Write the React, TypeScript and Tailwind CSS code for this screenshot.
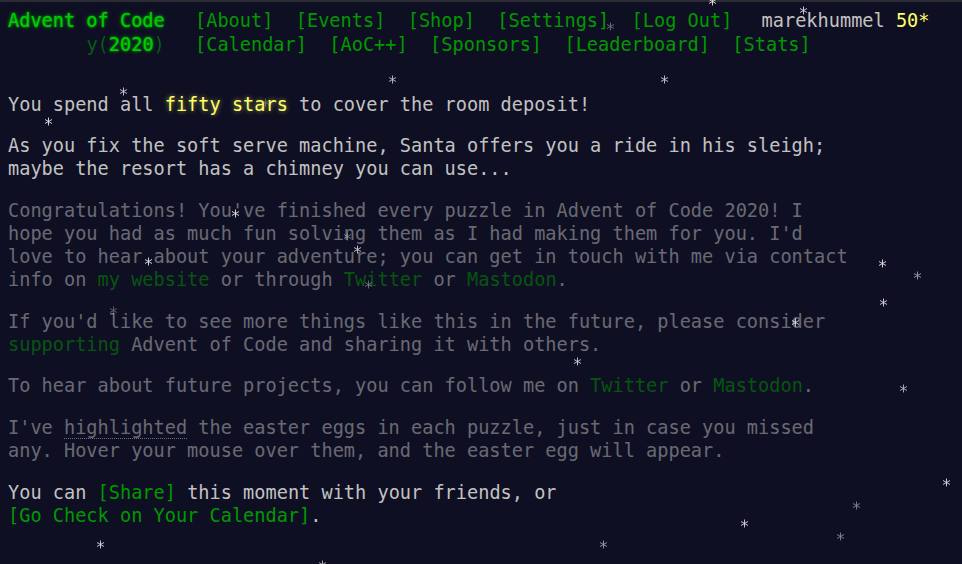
import React from "react";

const stars: [number, number, number][] = [
  [712, 1, 0.9],
  [803, 10, 0.85],
  [610, 26, 0.4],
  [392, 79, 0.75],
  [664, 79, 0.8],
  [123, 91, 0.8],
  [265, 102, 0.3],
  [48, 121, 0.9],
  [235, 213, 0.9],
  [347, 236, 0.45],
  [357, 249, 0.8],
  [148, 261, 0.9],
  [368, 284, 0.4],
  [882, 263, 0.9],
  [917, 275, 0.6],
  [883, 302, 0.85],
  [113, 310, 0.35],
  [795, 322, 0.85],
  [577, 361, 0.8],
  [903, 388, 0.7],
  [946, 482, 0.85],
  [856, 505, 0.5],
  [744, 523, 0.85],
  [840, 536, 0.5],
  [603, 544, 0.6],
  [100, 544, 0.85],
  [322, 564, 0.7],
];

function Star({ x, y, o }: { x: number; y: number; o: number }) {
  return (
    <svg
      className="absolute pointer-events-none"
      style={{ left: x - 4.5, top: y - 4.5, opacity: o }}
      width="9"
      height="9"
      viewBox="0 0 10 10"
    >
      <g stroke="#ffffff" strokeWidth="1" strokeLinecap="round">
        <line x1="5" y1="1" x2="5" y2="9" />
        <line x1="1.5" y1="3" x2="8.5" y2="7" />
        <line x1="1.5" y1="7" x2="8.5" y2="3" />
      </g>
    </svg>
  );
}

const navTop = ["About", "Events", "Shop", "Settings", "Log Out"];
const navBottom = ["Calendar", "AoC++", "Sponsors", "Leaderboard", "Stats"];

function Link({ children }: { children: React.ReactNode }) {
  return <a className="text-[#009900] no-underline">{children}</a>;
}

export default function App() {
  return (
    <div
      className="relative w-full h-[564px] overflow-hidden bg-[#0f0f23] text-[#c2c2c2] text-[18.6px] leading-[23px]"
      style={{ fontFamily: '"DejaVu Sans Mono", "Liberation Mono", monospace' }}
    >
      <div className="h-[2px] bg-[#2c2c34]" />

      {/* header */}
      <header className="pt-[6px] mb-[36.5px] whitespace-nowrap">
        <div className="flex items-center h-6">
          <div className="pl-2 w-[164.8px]">
            <span className="text-[#00cc00] [text-shadow:0_0_2px_#00cc00,0_0_5px_#00cc0080]">Advent of Code</span>
          </div>
          <ul className="flex ml-[19px]">
            {navTop.map((n) => (
              <li key={n} className="px-[11.2px]">
                <Link>[{n}]</Link>
              </li>
            ))}
          </ul>
          <div className="ml-[18px]">
            marekhummel <span className="text-[#ffff66]">50*</span>
          </div>
        </div>
        <div className="flex items-center h-6">
          <div className="pl-2 w-[164.8px] text-right">
            <span className="text-[#00cc00] opacity-40">y(</span>
            <span className="text-[#00cc00] [text-shadow:0_0_2px_#00cc00,0_0_5px_#00cc0080]">2020</span>
            <span className="text-[#00cc00] opacity-40">)</span>
          </div>
          <ul className="flex ml-[19px]">
            {navBottom.map((n) => (
              <li key={n} className="px-[11.2px]">
                <Link>[{n}]</Link>
              </li>
            ))}
          </ul>
        </div>
      </header>

      {/* main */}
      <main className="pl-2 w-[880px] flex flex-col gap-[18.7px] whitespace-nowrap">
        <p>
          You spend all{" "}
          <span className="text-[#ffff66] [text-shadow:0_0_5px_#ffff6699]">fifty stars</span> to cover the room
          deposit!
        </p>
        <p>
          As you fix the soft serve machine, Santa offers you a ride in his sleigh;
          <br />
          maybe the resort has a chimney you can use...
        </p>
        <p className="opacity-50">
          Congratulations! You've finished every puzzle in Advent of Code 2020! I
          <br />
          hope you had as much fun solving them as I had making them for you. I'd
          <br />
          love to hear about your adventure; you can get in touch with me via contact
          <br />
          info on <Link>my website</Link> or through <Link>Twitter</Link> or <Link>Mastodon</Link>.
        </p>
        <p className="opacity-50">
          If you'd like to see more things like this in the future, please consider
          <br />
          <Link>supporting</Link> Advent of Code and sharing it with others.
        </p>
        <p className="opacity-50">
          To hear about future projects, you can follow me on <Link>Twitter</Link> or{" "}
          <Link>Mastodon</Link>.
        </p>
        <p className="opacity-50">
          I've <span className="border-b border-dotted border-[#cccccc]">highlighted</span> the easter eggs in
          each puzzle, just in case you missed
          <br />
          any. Hover your mouse over them, and the easter egg will appear.
        </p>
        <p>
          You can <Link>[Share]</Link> this moment with your friends, or
          <br />
          <Link>[Go Check on Your Calendar]</Link>.
        </p>
      </main>

      {stars.map(([x, y, o], i) => (
        <Star key={i} x={x} y={y} o={o} />
      ))}
    </div>
  );
}
